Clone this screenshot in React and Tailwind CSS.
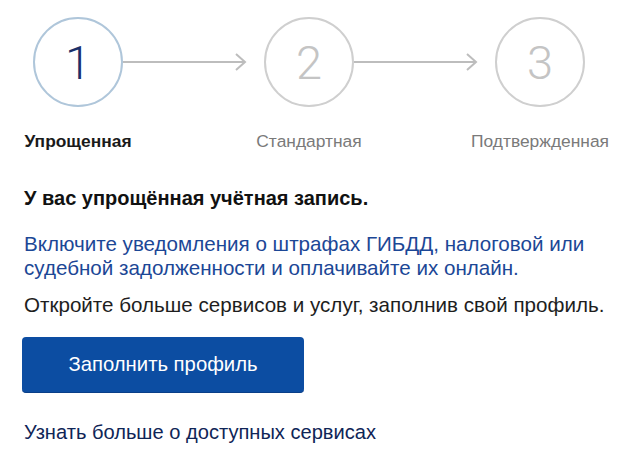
import React from "react";

function Arrow() {
  return (
    <svg width="141" height="20" viewBox="0 0 141 20" className="block">
      <line x1="0" y1="10" x2="121" y2="10" stroke="#bdbdbd" strokeWidth="2" />
      <polyline points="113,2 122,10 113,18" fill="none" stroke="#bdbdbd" strokeWidth="2" />
    </svg>
  );
}

function Step({ n, label, active }) {
  return (
    <div className="flex w-[90px] flex-col items-center">
      <div
        className={
          active
            ? "flex h-[90px] w-[90px] items-center justify-center rounded-full border-2 border-[#afc6da] text-[47px] font-light leading-none text-[#1b2f6a]"
            : "flex h-[90px] w-[90px] items-center justify-center rounded-full border-2 border-[#cfcfcf] text-[47px] font-light leading-none text-[#c4c4c4]"
        }
        style={{ fontFamily: 'Roboto, "Liberation Sans", sans-serif' }}
      >
        {n}
      </div>
      <div
        className={
          active
            ? "mt-[24px] whitespace-nowrap text-[17.4px] font-bold leading-[20px] text-[#1a1a1a]"
            : "mt-[24px] whitespace-nowrap text-[17.4px] leading-[20px] text-[#7a7a7a]"
        }
      >
        {label}
      </div>
    </div>
  );
}

export default function App() {
  return (
    <div
      className="h-[459px] w-[630px] overflow-hidden bg-white pl-[24px] pt-[17px]"
      style={{ fontFamily: '"Liberation Sans", Arial, sans-serif' }}
    >
      <div className="ml-[9px] flex items-start">
        <Step n="1" label="Упрощенная" active />
        <div className="mt-[35px]">
          <Arrow />
        </div>
        <Step n="2" label="Стандартная" />
        <div className="mt-[35px]">
          <Arrow />
        </div>
        <Step n="3" label="Подтвержденная" />
      </div>

      <div className="mt-[35px] text-[20px] font-bold leading-[24px] text-[#111]">
        У вас упрощённая учётная запись.
      </div>
      <div className="mt-[22px] text-[20.6px] leading-[24px] text-[#1c4796]">
        Включите уведомления о штрафах ГИБДД, налоговой или
        <br />
        судебной задолженности и оплачивайте их онлайн.
      </div>
      <div className="mt-[13px] text-[20.6px] leading-[24px] text-[#1e1e1e]">
        Откройте больше сервисов и услуг, заполнив свой профиль.
      </div>
      <button className="-ml-[2px] mt-[20px] flex h-[56px] w-[282px] items-center justify-center rounded-[4px] border-b border-[#0a3f88] bg-[#0c4da2] text-[20.3px] text-white">
        Заполнить профиль
      </button>
      <div className="mt-[27px] text-[20.1px] leading-[24px] text-[#0f2557]">
        Узнать больше о доступных сервисах
      </div>
    </div>
  );
}
